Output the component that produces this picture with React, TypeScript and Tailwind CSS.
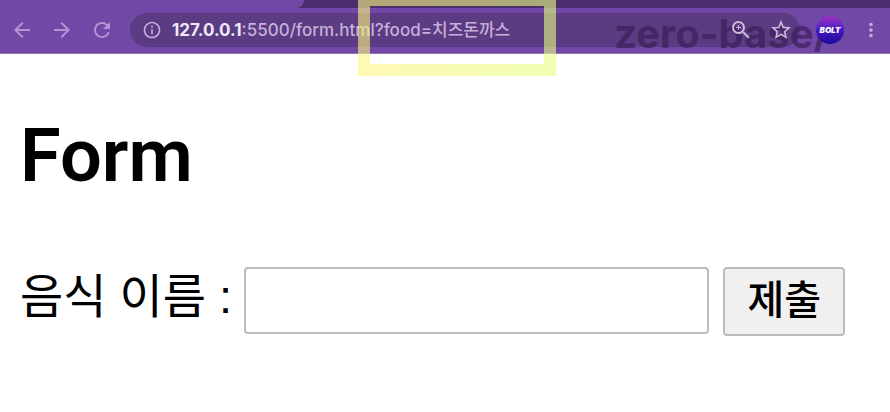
import { useState } from 'react';
import {
  MdArrowBack,
  MdArrowForward,
  MdInfoOutline,
  MdMoreVert,
  MdRefresh,
  MdStarBorder,
  MdZoomIn,
} from 'react-icons/md';

function BrowserBar() {
  return (
    <header className="relative bg-[#7248a6] border-b border-[#8d77ad] font-['Inter','Noto_Sans_CJK_KR',sans-serif]">
      {/* tab strip */}
      <div className="flex h-2 bg-[#4a2d6c]">
        <div className="w-[304px] bg-[#7248a6] rounded-br-lg" />
      </div>

      <div className="flex items-center pl-[10px] pr-2 pt-[5px] pb-[6px] text-[#b294d3]">
        <button type="button" aria-label="뒤로" className="mr-4">
          <MdArrowBack className="size-6 stroke-current" />
        </button>
        <button type="button" aria-label="앞으로" className="mr-4">
          <MdArrowForward className="size-6 stroke-current" />
        </button>
        <button type="button" aria-label="새로고침" className="mr-4">
          <MdRefresh className="size-6 stroke-current" />
        </button>

        <div className="flex flex-1 items-center h-[34px] px-3 rounded-full bg-[#5b3b82]">
          <MdInfoOutline className="size-5 mr-[10px] text-[#c3addb]" />
          <p className="flex-1 pt-[2px] text-[17px] font-medium whitespace-nowrap text-[#c5b0dc]">
            <span className="font-bold text-[#f0e8f8]">127.0.0.1</span>
            :5500/form.html?food=치즈돈까스
          </p>
        </div>

        <div className="relative z-10 ml-4 size-7 rounded-full bg-linear-to-b from-[#a32cc0] via-[#4516c4] to-[#1e0a94] flex items-center justify-center text-[8px] font-black italic text-white">
          BOLT
        </div>
        <button type="button" aria-label="메뉴" className="ml-4">
          <MdMoreVert className="size-[22px] text-[#c3addb]" />
        </button>
      </div>

      <div className="absolute right-[61px] top-3 text-[40px] leading-[44px] font-bold text-[#3a2059]/70">
        zero-base/
      </div>
      <div className="absolute right-[97px] top-[18px] flex gap-4 text-[#cbbadd]">
        <button type="button" aria-label="확대">
          <MdZoomIn className="size-6" />
        </button>
        <button type="button" aria-label="북마크">
          <MdStarBorder className="size-6" />
        </button>
      </div>

      {/* highlight box around the query string */}
      <div className="absolute left-[358px] -top-[6px] w-[198px] h-[82px] border-12 opacity-60 [border-image:linear-gradient(to_right,#fff782,#e8ff82)_1]" />
    </header>
  );
}

export default function App() {
  const [food, setFood] = useState('');

  return (
    <div className="min-h-screen overflow-hidden bg-white text-black">
      <BrowserBar />

      <main className="px-5 pt-[58px] font-['Roboto','Noto_Sans_CJK_KR',sans-serif]">
        <h1 className="text-[74px] leading-[88px] font-semibold">Form</h1>

        <form
          className="flex items-start mt-[67px] mr-[25px] font-['Liberation_Sans','Noto_Sans_CJK_KR',sans-serif]"
          onSubmit={(e) => e.preventDefault()}
        >
          <label htmlFor="food" className="mr-3 text-[47px] leading-[60px] whitespace-nowrap">
            음식 이름 :
          </label>
          <input
            id="food"
            name="food"
            type="text"
            value={food}
            onChange={(e) => setFood(e.target.value)}
            className="flex-1 min-w-0 h-[67px] px-2 text-[40px] border-2 border-[#bcbcbc] rounded-sm bg-white"
          />
          <button
            type="submit"
            className="ml-[14px] h-[69px] px-[22px] pb-1 text-[40px] leading-[60px] font-medium border-2 border-[#bcbcbc] rounded-sm bg-[#f0f0f0]"
          >
            제출
          </button>
        </form>
      </main>
    </div>
  );
}
